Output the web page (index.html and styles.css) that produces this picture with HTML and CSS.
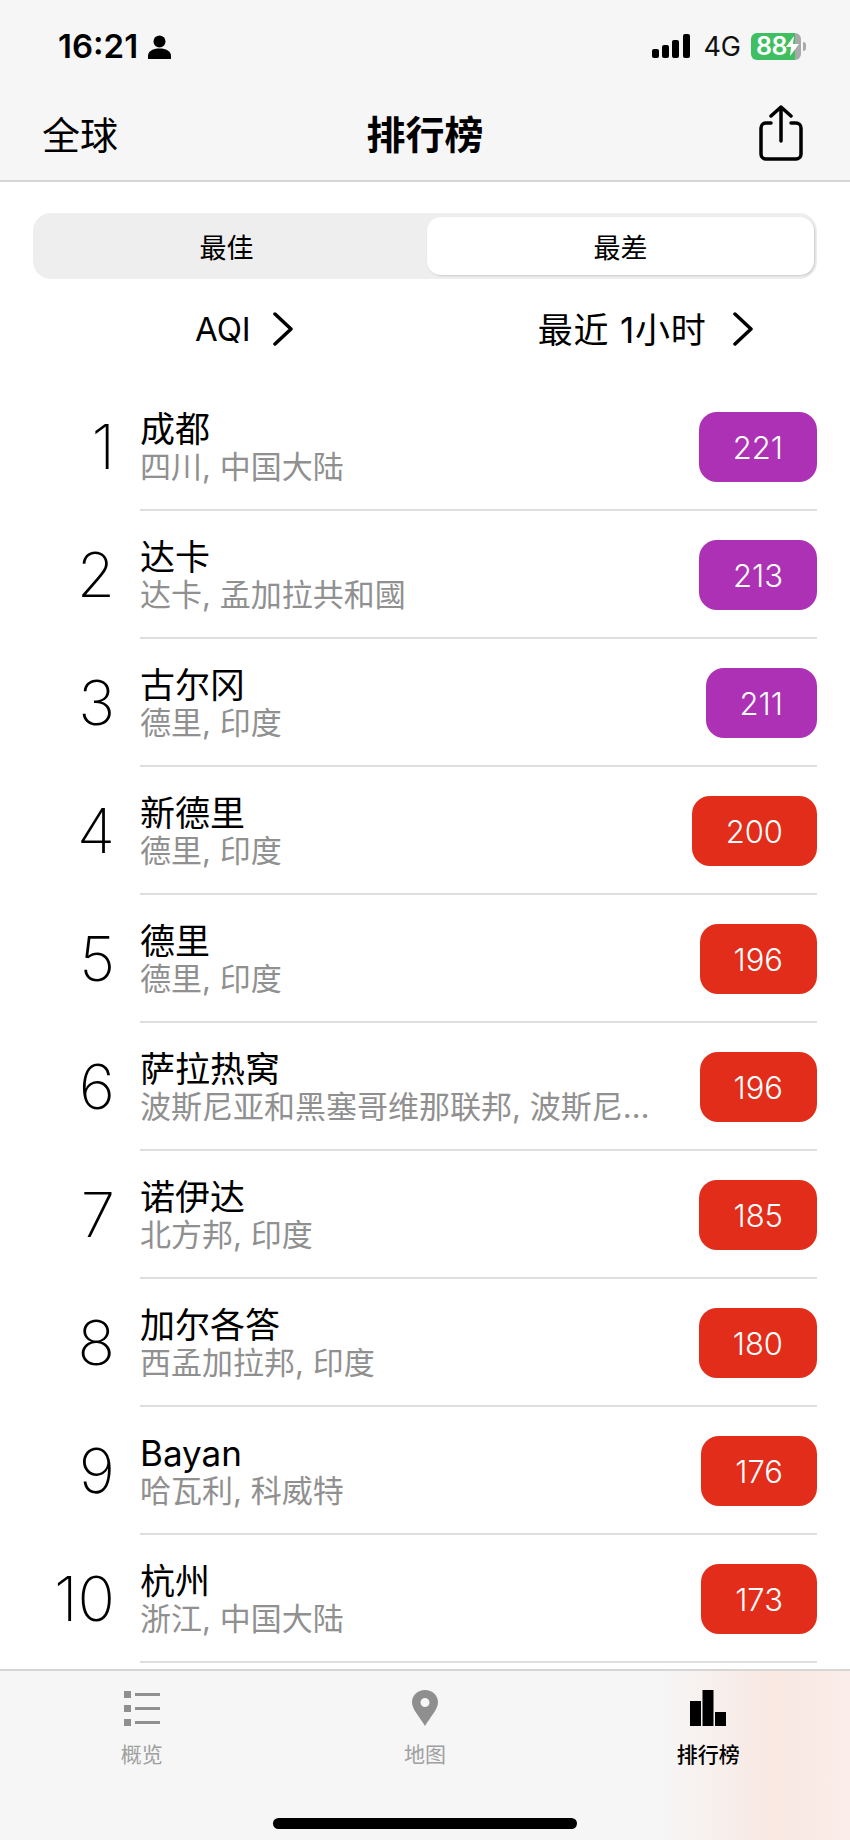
FILE: index.html
```html
<!DOCTYPE html>
<html lang="zh-CN">

<head>
    <meta charset="UTF-8">
    <meta name="viewport" content="width=device-width, initial-scale=1.0">
    <title>排行榜</title>
    <link rel="stylesheet" href="styles.css">
</head>

<body>
    <div class="app">
        <header class="top-bar">
            <div class="status-bar">
                <div class="status-left">
                    <span class="time">16:21</span>
                    <svg class="person-icon" width="23" height="24" viewBox="0 0 23 24"><circle cx="11.5" cy="6.5" r="6"/><path d="M0 24v-3c0-5 5-7.5 11.5-7.5S23 16 23 21v3z"/></svg>
                </div>
                <div class="status-right">
                    <svg class="signal-icon" width="38" height="24" viewBox="0 0 38 24"><rect x="0" y="15" width="7" height="9" rx="2"/><rect x="10" y="11" width="7" height="13" rx="2"/><rect x="20" y="6" width="7" height="18" rx="2"/><rect x="31" y="0" width="7" height="24" rx="2"/></svg>
                    <span class="network">4G</span>
                    <div class="battery">
                        <span class="battery-level">88</span>
                        <svg class="bolt-icon" width="13" height="20" viewBox="0 0 13 20"><path d="M8 0L0 11h5l-1 9 9-12H7z"/></svg>
                    </div>
                    <span class="battery-cap"></span>
                </div>
            </div>
            <nav class="nav-bar">
                <span class="nav-left">全球</span>
                <h1 class="nav-title">排行榜</h1>
                <svg class="share-icon" width="44" height="56" viewBox="0 0 44 56"><path d="M12 18H7a5 5 0 0 0-5 5v26a5 5 0 0 0 5 5h30a5 5 0 0 0 5-5V23a5 5 0 0 0-5-5h-5M22 36V2M12 11l10-9 10 9"/></svg>
            </nav>
        </header>

        <main class="content">
            <div class="segment">
                <div class="segment-item">最佳</div>
                <div class="segment-item active">最差</div>
            </div>

            <div class="filters">
                <div class="filter filter-metric">AQI
                    <svg class="chevron" width="20" height="34" viewBox="0 0 20 34"><path d="M2 2l16 15L2 32"/></svg>
                </div>
                <div class="filter filter-time"><span class="filter-label">最近 1小时</span>
                    <svg class="chevron" width="20" height="34" viewBox="0 0 20 34"><path d="M2 2l16 15L2 32"/></svg>
                </div>
            </div>

            <ul class="rank-list">
                <li class="rank-row">
                    <span class="rank">1</span>
                    <div class="row-body">
                        <div class="place"><div class="city">成都</div><div class="region">四川, 中国大陆</div></div>
                        <span class="aqi purple">221</span>
                    </div>
                </li>
                <li class="rank-row">
                    <span class="rank">2</span>
                    <div class="row-body">
                        <div class="place"><div class="city">达卡</div><div class="region">达卡, 孟加拉共和國</div></div>
                        <span class="aqi purple">213</span>
                    </div>
                </li>
                <li class="rank-row">
                    <span class="rank">3</span>
                    <div class="row-body">
                        <div class="place"><div class="city">古尔冈</div><div class="region">德里, 印度</div></div>
                        <span class="aqi purple">211</span>
                    </div>
                </li>
                <li class="rank-row">
                    <span class="rank">4</span>
                    <div class="row-body">
                        <div class="place"><div class="city">新德里</div><div class="region">德里, 印度</div></div>
                        <span class="aqi red">200</span>
                    </div>
                </li>
                <li class="rank-row">
                    <span class="rank">5</span>
                    <div class="row-body">
                        <div class="place"><div class="city">德里</div><div class="region">德里, 印度</div></div>
                        <span class="aqi red">196</span>
                    </div>
                </li>
                <li class="rank-row">
                    <span class="rank">6</span>
                    <div class="row-body">
                        <div class="place"><div class="city">萨拉热窝</div><div class="region">波斯尼亚和黑塞哥维那联邦, 波斯尼…</div></div>
                        <span class="aqi red">196</span>
                    </div>
                </li>
                <li class="rank-row">
                    <span class="rank">7</span>
                    <div class="row-body">
                        <div class="place"><div class="city">诺伊达</div><div class="region">北方邦, 印度</div></div>
                        <span class="aqi red">185</span>
                    </div>
                </li>
                <li class="rank-row">
                    <span class="rank">8</span>
                    <div class="row-body">
                        <div class="place"><div class="city">加尔各答</div><div class="region">西孟加拉邦, 印度</div></div>
                        <span class="aqi red">180</span>
                    </div>
                </li>
                <li class="rank-row">
                    <span class="rank">9</span>
                    <div class="row-body">
                        <div class="place"><div class="city">Bayan</div><div class="region">哈瓦利, 科威特</div></div>
                        <span class="aqi red">176</span>
                    </div>
                </li>
                <li class="rank-row">
                    <span class="rank">10</span>
                    <div class="row-body">
                        <div class="place"><div class="city">杭州</div><div class="region">浙江, 中国大陆</div></div>
                        <span class="aqi red">173</span>
                    </div>
                </li>
            </ul>
        </main>

        <footer class="tab-bar">
            <div class="tabs">
                <div class="tab">
                    <svg class="tab-icon" width="36" height="36" viewBox="0 0 36 36"><rect x="0" y="1" width="7" height="7"/><rect x="0" y="15" width="7" height="7"/><rect x="0" y="29" width="7" height="7"/><rect x="11" y="3" width="25" height="3"/><rect x="11" y="17" width="25" height="3"/><rect x="11" y="31" width="25" height="3"/></svg>
                    <span>概览</span>
                </div>
                <div class="tab">
                    <svg class="tab-icon" width="26" height="36" viewBox="0 0 26 36"><path fill-rule="evenodd" d="M13 0C5.8 0 0 5.4 0 12.3 0 19.5 8 27.500 13 36c5-8.500 13-16.500 13-23.700C26 5.400 20.200 0 13 0zm0 8a4.500 4.500 0 1 1 0 9 4.500 4.500 0 0 1 0-9z"/></svg>
                    <span>地图</span>
                </div>
                <div class="tab active">
                    <svg class="tab-icon" width="36" height="36" viewBox="0 0 36 36"><rect x="0" y="11" width="11" height="25"/><rect x="12.500" y="0" width="11" height="36"/><rect x="25" y="22" width="11" height="14"/></svg>
                    <span>排行榜</span>
                </div>
            </div>
            <div class="home-bar"></div>
        </footer>
    </div>
</body>

</html>
```

FILE: styles.css
```css
* {
    margin: 0;
    padding: 0;
    box-sizing: border-box;
}

body {
    font-family: Inter, "Noto Sans CJK SC", sans-serif;
    background-color: #FFFFFF;
    color: #000;
}

.app {
    width: 850px;
    height: 1840px;
    display: flex;
    flex-direction: column;
    overflow: hidden;
}

/* Status bar and nav */
.top-bar {
    height: 182px;
    background-color: #F6F6F6;
    border-bottom: 2px solid #D6D6D6;
    flex-shrink: 0;
}

.status-bar {
    height: 92px;
    padding: 0 44px 0 58px;
    display: flex;
    justify-content: space-between;
    align-items: center;
}

.status-left,
.status-right {
    display: flex;
    align-items: center;
}

.time {
    font-size: 33px;
    font-weight: 600;
    margin-right: 10px;
}

.person-icon {
    margin-top: 2px;
}

.network {
    font-size: 27px;
    margin: 0 10px 0 13px;
    color: #111;
}

.battery {
    width: 50px;
    height: 27px;
    border-radius: 6px;
    padding-left: 5px;
    background: linear-gradient(to right, #3FBF62 88%, #A9A9A9 88%);
    color: #FFFFFF;
    font-size: 25px;
    font-weight: 600;
    display: flex;
    align-items: center;
    letter-spacing: -0.5px;
}

.bolt-icon {
    fill: #FFFFFF;
    flex-shrink: 0;
    margin-left: -1px;
}

.battery-cap {
    width: 3px;
    height: 9px;
    margin-left: 2px;
    border-radius: 0 3px 3px 0;
    background-color: #A9A9A9;
}

.nav-bar {
    height: 80px;
    padding: 0 47px 0 42px;
    display: flex;
    justify-content: space-between;
    align-items: center;
    position: relative;
}

.nav-left {
    font-size: 38px;
}

.nav-title {
    position: absolute;
    left: 0;
    right: 0;
    text-align: center;
    font-size: 39px;
    font-weight: 700;
}

.share-icon {
    fill: none;
    stroke: #000;
    stroke-width: 3.5;
    stroke-linecap: round;
    stroke-linejoin: round;
    margin-top: 2px;
}

/* Main content */
.content {
    flex: 1;
    min-height: 0;
    overflow: hidden;
}

.segment {
    height: 66px;
    margin: 31px 33px 0;
    background-color: #EEEEEF;
    border-radius: 18px;
    display: flex;
}

.segment-item {
    flex: 1 1 0;
    display: flex;
    justify-content: center;
    align-items: center;
    font-size: 27px;
    border-radius: 14px;
}

.segment-item.active {
    margin: 4px 3px 4px 7px;
    background-color: #FFFFFF;
    box-shadow: 1px 1px 2px rgba(0, 0, 0, 0.15);
}

.filters {
    height: 68px;
    margin-top: 16px;
    display: flex;
    font-size: 33px;
}

.filter {
    display: flex;
    align-items: center;
    gap: 22px;
}

.filter-metric {
    margin-left: 195px;
}

.filter-time {
    margin-left: 245px;
    gap: 26px;
}

.filter-label {
    font-size: 35px;
    letter-spacing: 0.8px;
    margin-bottom: 4px;
}

.chevron {
    fill: none;
    stroke: #000;
    stroke-width: 3.500;
    stroke-linecap: round;
    stroke-linejoin: round;
}

/* Ranking rows */
.rank-list {
    list-style: none;
    margin-top: 20px;
}

.rank-row {
    height: 128px;
    display: flex;
}

.rank {
    width: 115px;
    flex-shrink: 0;
    text-align: right;
    font-size: 62px;
    font-weight: 200;
    line-height: 104px;
    padding-top: 12px;
}

.row-body {
    flex: 1;
    min-width: 0;
    margin: 0 33px 0 25px;
    padding-top: 2px;
    border-bottom: 2px solid #DEDEDE;
    display: flex;
    justify-content: space-between;
    align-items: center;
}

.place {
    min-width: 0;
}

.city {
    font-size: 35px;
    line-height: 38px;
}

.region {
    font-size: 31px;
    line-height: 37px;
    color: #909090;
    white-space: nowrap;
}

.aqi {
    height: 70px;
    padding: 0 34px;
    border-radius: 18px;
    color: #FFFFFF;
    font-size: 31px;
    font-weight: 300;
    display: flex;
    align-items: center;
    flex-shrink: 0;
}

.aqi.purple {
    background-color: #AD31B4;
}

.aqi.red {
    background-color: #E32D1B;
}

/* Tab bar */
.tab-bar {
    height: 171px;
    flex-shrink: 0;
    border-top: 2px solid #D6D6D6;
    background: linear-gradient(to right, #F6F6F6 78%, #F9E8E2 91%, #FBEDE9 100%);
}

.tabs {
    display: flex;
    padding-top: 19px;
}

.tab {
    flex: 1;
    display: flex;
    flex-direction: column;
    align-items: center;
    font-size: 21px;
    color: #A0A0A0;
}

.tab-icon {
    fill: #8F8F8F;
    margin-bottom: 12px;
}

.tab.active {
    color: #000;
    font-weight: 500;
}

.tab.active .tab-icon {
    fill: #000;
}

.home-bar {
    width: 304px;
    height: 11px;
    margin: 50px auto 0;
    background-color: #000;
    border-radius: 6px;
}
```
